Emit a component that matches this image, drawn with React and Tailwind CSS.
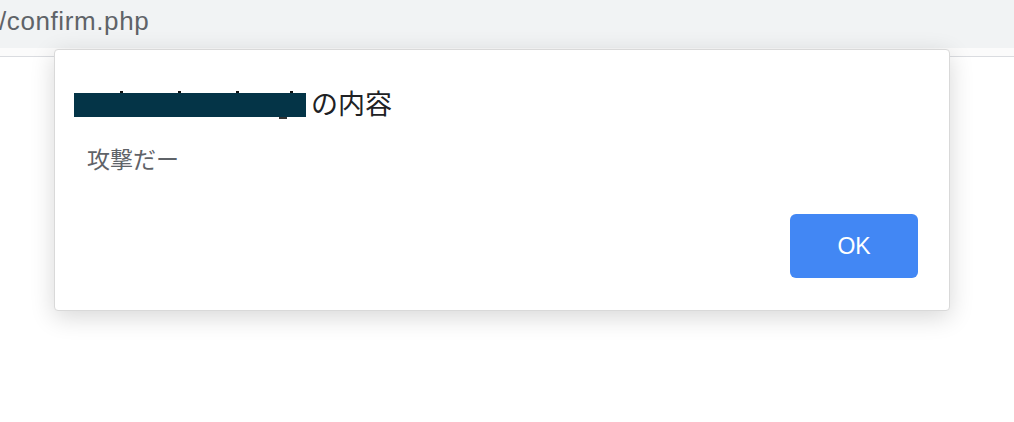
import React from "react";

const FONT = {
  fontFamily: '"Liberation Sans", "Noto Sans CJK JP", sans-serif',
};

function Redacted() {
  // masked site name, with a few stray pixels of the hidden text peeking out
  return (
    <span className="relative inline-block w-[232px] h-[24px] bg-[#043447] align-middle">
      <span className="absolute -top-[2px] left-[46px] w-[3px] h-[2px] bg-[#111]" />
      <span className="absolute -top-[2px] left-[104px] w-[3px] h-[2px] bg-[#111]" />
      <span className="absolute -top-[2px] left-[162px] w-[3px] h-[2px] bg-[#111]" />
      <span className="absolute -top-[2px] left-[216px] w-[3px] h-[2px] bg-[#111]" />
      <span className="absolute -bottom-[2px] left-[205px] w-[8px] h-[2px] bg-[#333]" />
    </span>
  );
}

export default function App() {
  return (
    <div
      className="relative w-[1014px] h-[422px] bg-white overflow-hidden"
      style={FONT}
    >
      <div className="h-[48px] bg-[#f1f3f4] flex items-center">
        <span className="text-[26px] tracking-[0.6px] text-[#5f6368] -mt-[6px] -ml-[1px]">
          /confirm.php
        </span>
      </div>
      <div className="h-[9px] border-b border-[#dadce0] bg-[#fbfbfb]" />

      <div className="absolute left-[54px] top-[49px] w-[896px] h-[262px] bg-white rounded-[4px] border border-[#d9d9d9] shadow-[0_6px_24px_rgba(0,0,0,0.16)] flex flex-col">
        <div className="pt-[43px] pl-[19px] flex items-center">
          <Redacted />
          <span className="ml-[5px] text-[27px] leading-[24px] text-[#202124]">
            の内容
          </span>
        </div>
        <div className="pl-[32px] pt-[30px] text-[23px] leading-[26px] text-[#5f6368]">
          攻撃だー
        </div>
        <div className="flex justify-end pr-[31px] pt-[41px]">
          <button className="w-[128px] h-[64px] rounded-[6px] bg-[#4287f4] text-white text-[23px]">
            OK
          </button>
        </div>
      </div>
    </div>
  );
}
